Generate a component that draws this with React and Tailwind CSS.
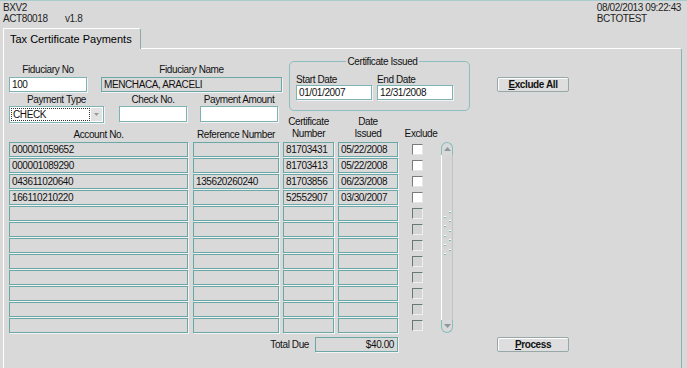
const rows = [
  ["000001059652", "", "81703431", "05/22/2008", true],
  ["000001089290", "", "81703413", "05/22/2008", true],
  ["043611020640", "135620260240", "81703856", "06/23/2008", true],
  ["166110210220", "", "52552907", "03/30/2007", true],
  ["", "", "", "", false],
  ["", "", "", "", false],
  ["", "", "", "", false],
  ["", "", "", "", false],
  ["", "", "", "", false],
  ["", "", "", "", false],
  ["", "", "", "", false],
  ["", "", "", "", false],
];

const grayField =
  "h-[15px] border border-[#6aa7a7] bg-[#d9d9d9] shadow-[1px_1px_0_#f3f3f3] pl-[2px] leading-[13px] whitespace-nowrap overflow-hidden";
const whiteField =
  "h-[15px] border border-[#7db3b3] bg-white shadow-[1px_1px_0_#f3f3f3] pl-[2px] leading-[13px] whitespace-nowrap overflow-hidden";

function Checkbox({ enabled }) {
  return enabled ? (
    <div className="w-[11px] h-[11px] bg-white border border-t-[#7a7a7a] border-l-[#7a7a7a] border-r-[#e6e6e6] border-b-[#e6e6e6]" />
  ) : (
    <div className="w-[11px] h-[11px] bg-[#d4d4d4] border border-t-[#667878] border-l-[#667878] border-r-[#f0f0f0] border-b-[#f0f0f0]" />
  );
}

function Button({ children }) {
  return (
    <div className="w-[72px] h-[15px] border border-[#98a8a8] rounded-[2px] bg-[#dedede] shadow-[inset_1px_1px_0_#ffffff] text-center font-bold leading-[13px] text-[#111]">
      {children}
    </div>
  );
}

function ScrollDots() {
  const dots = [];
  for (let i = 0; i < 10; i++) {
    const x = i % 2 === 0 ? 6 : 1;
    const y = Math.round(i * 4.7);
    dots.push(
      <g key={i}>
        <rect x={x} y={y} width="2" height="1" fill="#ffffff" />
        <rect x={x} y={y + 1} width="2" height="1" fill="#7fb3b3" />
      </g>
    );
  }
  return (
    <svg width="9" height="46" viewBox="0 0 9 46">
      {dots}
    </svg>
  );
}

export default function App() {
  return (
    <div className="w-[687px] h-[368px] overflow-hidden bg-[#d9d9d9] border-t border-[#a9cccc] font-['Liberation_Sans',Arial,sans-serif] text-[10px] tracking-[-0.4px] text-[#111]">
      {/* header */}
      <div className="flex justify-between pl-[3px] pr-[6px] pt-[1px] leading-[11px] text-[#1e1e1e]">
        <div>
          <div>BXV2</div>
          <div className="flex">
            <span className="w-[62px]">ACT80018</span>
            <span>v1.8</span>
          </div>
        </div>
        <div>
          <div>08/02/2013 09:22:43</div>
          <div>BCTOTEST</div>
        </div>
      </div>

      {/* tab */}
      <div className="relative z-10 mt-[4px] -mb-[1px] ml-[3px] w-[138px] h-[21px] bg-[#d9d9d9] border-t border-l border-white border-r border-r-[#8fa9a9] rounded-tr-[3px] pl-[6px] pt-[3px] text-[11px] tracking-normal leading-[14px] text-black">
        Tax Certificate Payments
      </div>

      {/* panel */}
      <div className="ml-[3px] w-[679px] h-[330px] border-t border-l border-white border-r border-r-[#8fb0b0] rounded-tr-[3px] pl-[5px]">
        <div className="flex">
          {/* column A */}
          <div className="w-[274px] pt-[15px]">
            <div className="flex">
              <div className="w-[78px] flex flex-col items-center">
                <div className="leading-[11px]">Fiduciary No</div>
                <div className={`mt-[2px] w-full ${whiteField}`}>100</div>
              </div>
              <div className="ml-[14px] w-[181px] flex flex-col items-center">
                <div className="leading-[11px]">Fiduciary Name</div>
                <div className={`mt-[2px] w-full ${grayField}`}>MENCHACA, ARACELI</div>
              </div>
            </div>
            <div className="flex mt-[2px]">
              <div className="w-[95px] flex flex-col items-center">
                <div className="leading-[11px]">Payment Type</div>
                <div className="mt-[1px] w-full h-[17px] border border-[#7db3b3] bg-white shadow-[1px_1px_0_#f3f3f3] flex p-[1px]">
                  <div className="flex-1 border border-dotted border-[#333] leading-[11px] pl-[1px]">CHECK</div>
                  <div className="w-[11px] ml-[1px] bg-[#e2e2e2] flex items-center justify-center">
                    <svg width="5" height="3" viewBox="0 0 5 3">
                      <path d="M0 0 L5 0 L2.5 3 Z" fill="#9a9a9a" />
                    </svg>
                  </div>
                </div>
              </div>
              <div className="ml-[15px] w-[68px] flex flex-col items-center">
                <div className="leading-[11px]">Check No.</div>
                <div className={`mt-[1px] w-full ${whiteField} h-[16px]`}></div>
              </div>
              <div className="ml-[13px] w-[78px] flex flex-col items-center">
                <div className="leading-[11px] whitespace-nowrap">Payment Amount</div>
                <div className={`mt-[1px] w-full ${whiteField} h-[16px]`}></div>
              </div>
            </div>
            <div className="flex mt-[6px] leading-[11px]">
              <div className="w-[179px] text-center">Account No.</div>
              <div className="ml-[5px] w-[86px] text-center whitespace-nowrap">Reference Number</div>
            </div>
            <div className="mt-[2px] flex flex-col gap-[1px]">
              {rows.map((r, i) => (
                <div key={i} className="flex">
                  <div className={`w-[179px] ${grayField}`}>{r[0]}</div>
                  <div className={`ml-[5px] w-[86px] ${grayField}`}>{r[1]}</div>
                </div>
              ))}
            </div>
          </div>

          {/* column B */}
          <div className="w-[187px]">
            <fieldset className="mt-[7px] ml-[6px] w-[181px] border border-[#8dbdbd] rounded-[5px] pl-[6px] pt-[7px] pb-[10px]">
              <legend className="mx-auto px-[1px] leading-[11px]">Certificate Issued</legend>
              <div className="flex">
                <div className="w-[76px]">
                  <div className="leading-[11px]">Start Date</div>
                  <div className={`w-full ${whiteField}`}>01/01/2007</div>
                </div>
                <div className="ml-[5px] w-[76px]">
                  <div className="leading-[11px]">End Date</div>
                  <div className={`w-full ${whiteField}`}>12/31/2008</div>
                </div>
              </div>
            </fieldset>
            <div className="mt-[5px] flex leading-[12px]">
              <div className="w-[51px] text-center">
                Certificate
                <br />
                Number
              </div>
              <div className="ml-[4px] w-[60px] text-center">
                Date
                <br />
                Issued
              </div>
              <div className="ml-[6px] w-[34px] text-center self-end">Exclude</div>
            </div>
            <div className="mt-[2px] flex">
              <div className="flex flex-col gap-[1px]">
                {rows.map((r, i) => (
                  <div key={i} className="flex">
                    <div className={`w-[51px] ${grayField}`}>{r[2]}</div>
                    <div className={`ml-[4px] w-[60px] ${grayField}`}>{r[3]}</div>
                    <div className="ml-[6px] w-[34px] pl-[8px] pt-[2px]">
                      <Checkbox enabled={r[4]} />
                    </div>
                  </div>
                ))}
              </div>
              <div className="ml-[3px] w-[12px] flex flex-col">
                <div className="h-[13px] rounded-t-[6px] border border-b-0 border-[#86bcbc] flex items-center justify-center">
                  <svg width="7" height="4" viewBox="0 0 7 4">
                    <path d="M0 4 L3.5 0 L7 4 Z" fill="#8a9a9a" />
                  </svg>
                </div>
                <div className="flex-1 border-l border-white border-r border-r-[#c4c4c4] bg-[#d6d6d6] flex justify-center pt-[56px]">
                  <ScrollDots />
                </div>
                <div className="h-[13px] rounded-b-[6px] border border-t-0 border-[#86bcbc] flex items-center justify-center">
                  <svg width="7" height="4" viewBox="0 0 7 4">
                    <path d="M0 0 L7 0 L3.5 4 Z" fill="#8a9a9a" />
                  </svg>
                </div>
              </div>
            </div>
          </div>

          {/* column C */}
          <div className="ml-[27px] mt-[28px]">
            <Button>
              <span className="underline">E</span>xclude All
            </Button>
          </div>
        </div>

        {/* bottom row */}
        <div className="mt-[4px] flex items-center">
          <div className="w-[300px] text-right leading-[15px]">Total Due</div>
          <div className={`ml-[6px] w-[83px] ${grayField} text-right pr-[3px]`}>$40.00</div>
          <div className="ml-[99px]">
            <Button>
              <span className="underline">P</span>rocess
            </Button>
          </div>
        </div>
      </div>
    </div>
  );
}
